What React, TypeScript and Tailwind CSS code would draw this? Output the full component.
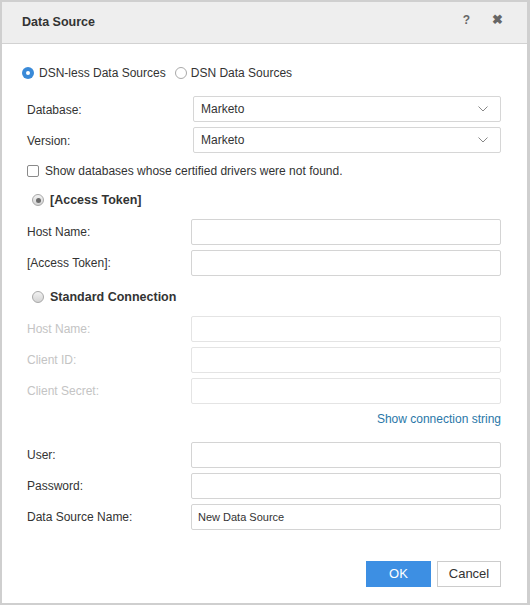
import React from "react";

const font = { fontFamily: '"Liberation Sans", Arial, sans-serif' };

function Chevron() {
  return (
    <svg width="10" height="6" viewBox="0 0 10 6" className="text-[#888]">
      <polyline points="0.5,0.5 5,5 9.5,0.5" fill="none" stroke="currentColor" strokeWidth="1" />
    </svg>
  );
}

function Select({ value }: { value: string }) {
  return (
    <div className="ml-[191px] w-[308px] h-[26px] border border-[#d6d6d6] rounded-[2px] flex items-center justify-between pl-[7px] pr-[12px] text-[12px] text-[#333]">
      <span>{value}</span>
      <Chevron />
    </div>
  );
}

function Field({ label, value, disabled }: { label: string; value?: string; disabled?: boolean }) {
  return (
    <div className="flex items-center h-[26px]">
      <div className={`w-[189px] pl-[25px] shrink-0 text-[12px] ${disabled ? "text-[#c4c4c4]" : "text-[#333]"}`}>{label}</div>
      <div
        className={`w-[310px] h-[26px] border rounded-[2px] flex items-center pl-[6px] text-[11px] text-[#333] ${
          disabled ? "border-[#e4e4e4]" : "border-[#d4d4d4]"
        }`}
      >
        {value}
      </div>
    </div>
  );
}

function GrayRadio({ checked }: { checked?: boolean }) {
  return (
    <span className="w-[12px] h-[12px] rounded-full border border-[#a8a8a8] bg-gradient-to-b from-[#f2f2f2] to-[#d4d4d4] flex items-center justify-center">
      {checked && <span className="w-[5px] h-[5px] rounded-full bg-[#6b6b6b]" />}
    </span>
  );
}

export default function App() {
  return (
    <div style={font} className="w-[530px] h-[605px] bg-white border-2 border-[#cfcfcf] border-r-[3px] flex flex-col text-[#333]">
      {/* Header */}
      <div className="h-[42px] shrink-0 bg-[#eeeeee] border-b border-[#d2d2d2] flex items-center justify-between pl-[20px] pr-[24px]">
        <span className="text-[12.5px] font-bold text-[#333]">Data Source</span>
        <div className="flex items-center gap-[22px] -mt-[6px] text-[#666] font-bold">
          <span className="text-[12px]">?</span>
          <span className="text-[13px]">✖</span>
        </div>
      </div>

      {/* Body */}
      <div className="flex flex-col">
        <div className="flex items-center h-[20px] mt-[19px] pl-[20px] text-[12px]">
          <span className="w-[12px] h-[12px] rounded-full bg-[#3a8ad8] flex items-center justify-center">
            <span className="w-[4px] h-[4px] rounded-full bg-white" />
          </span>
          <span className="ml-[5px]">DSN-less Data Sources</span>
          <span className="ml-[9px] w-[12px] h-[12px] rounded-full border border-[#a9a9a9] bg-white" />
          <span className="ml-[4px]">DSN Data Sources</span>
        </div>

        <div className="relative mt-[13px]">
          <span className="absolute left-[25px] top-[5px] text-[12px]">Database:</span>
          <Select value="Marketo" />
        </div>
        <div className="relative mt-[5px]">
          <span className="absolute left-[25px] top-[5px] text-[12px]">Version:</span>
          <Select value="Marketo" />
        </div>

        <div className="flex items-center h-[20px] mt-[8px] pl-[25px] text-[12px]">
          <span className="w-[12px] h-[12px] border border-[#8a8a8a] rounded-[2px] bg-white" />
          <span className="ml-[6px]">Show databases whose certified drivers were not found.</span>
        </div>

        <div className="flex items-center h-[20px] mt-[9px] pl-[30px]">
          <GrayRadio checked />
          <span className="ml-[6px] text-[12.5px] font-bold">[Access Token]</span>
        </div>

        <div className="flex flex-col gap-[5px] mt-[9px]">
          <Field label="Host Name:" />
          <Field label="[Access Token]:" />
        </div>

        <div className="flex items-center h-[20px] mt-[11px] pl-[30px]">
          <GrayRadio />
          <span className="ml-[6px] text-[12.5px] font-bold">Standard Connection</span>
        </div>

        <div className="flex flex-col gap-[5px] mt-[9px]">
          <Field label="Host Name:" disabled />
          <Field label="Client ID:" disabled />
          <Field label="Client Secret:" disabled />
        </div>

        <div className="flex justify-end pr-[26px] mt-[5px] h-[20px] items-center text-[12px] text-[#2a77a8]">
          Show connection string
        </div>

        <div className="flex flex-col gap-[5px] mt-[13px]">
          <Field label="User:" />
          <Field label="Password:" />
          <Field label="Data Source Name:" value="New Data Source" />
        </div>

        <div className="flex justify-end gap-[6px] pr-[26px] mt-[31px]">
          <button className="w-[65px] h-[26px] bg-[#3d8fe3] text-white text-[13px]">OK</button>
          <button className="w-[64px] h-[26px] bg-white border border-[#cccccc] text-[#333] text-[13px]">Cancel</button>
        </div>
      </div>
    </div>
  );
}
